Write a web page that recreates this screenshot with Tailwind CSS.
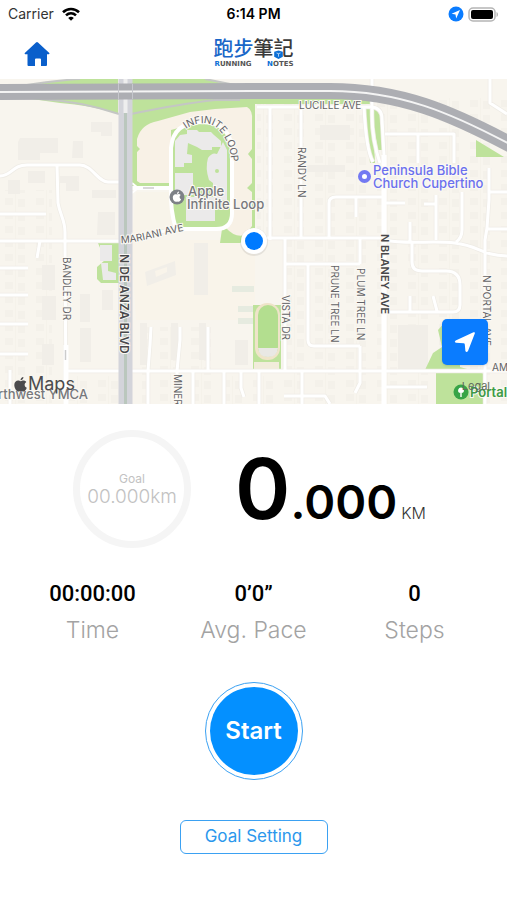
<!DOCTYPE html>
<html lang="en">
<head>
<meta charset="utf-8">
<meta name="viewport" content="width=device-width, initial-scale=1">
<title>Running Notes</title>
<script src="https://cdn.jsdelivr.net/npm/@tailwindcss/browser@4"></script>
</head>
<body class="min-h-screen bg-white font-['Inter','Noto_Sans_CJK_TC',sans-serif] text-black">

<!-- Status bar -->
<div class="grid h-7 grid-cols-3 items-center px-2 text-sm">
  <div class="flex items-center gap-2 text-[#333]">
    <span>Carrier</span>
    <svg class="h-[14px] w-[18px]" viewBox="0 0 18 14" fill="none" stroke="#000" stroke-width="2.6" aria-hidden="true">
      <path d="M1 5.2C5.5.9 12.500.9 17 5.200"/><path d="M4 8.400c2.900-2.700 7.100-2.700 10 0"/><path d="M9 13.800 6.200 10.900c1.700-1.500 3.900-1.500 5.600 0z" fill="#000" stroke="none"/>
    </svg>
  </div>
  <div class="text-center font-semibold">6:14 PM</div>
  <div class="flex items-center justify-end gap-1">
    <svg class="size-4" viewBox="0 0 16 16" aria-hidden="true"><circle cx="8" cy="8" r="7.500" fill="#0a7cff"/><path d="M12 4 3.600 7.800l3.900.7.700 3.900z" fill="#fff"/></svg>
    <svg class="h-[15px] w-[31px]" viewBox="0 0 31 15" aria-hidden="true"><rect x="1" y="1" width="26" height="13" rx="4" fill="#fff" stroke="#b5b5b5" stroke-width="1.500"/><rect x="3" y="3" width="22" height="9" rx="2" fill="#000"/><path d="M28.500 5v5c2-.8 2-4.200 0-5z" fill="#b5b5b5"/></svg>
  </div>
</div>

<!-- Navigation bar -->
<header class="grid h-[51px] grid-cols-3 items-center px-6">
  <a href="#" aria-label="Home" class="w-[26px]">
    <svg class="h-[26px] w-[26px]" viewBox="0 0 26 26" fill="#0a5fcb" aria-hidden="true"><path d="M12 1.400q1-.9 2 0L25.300 12q.6.900-.4 1.200H23V24q0 1-1 1h-5V18.500q0-1-1-1h-4q-1 0-1 1V25H4.500q-1 0-1-1V13.200H1.200Q.2 12.900.8 12z"/></svg>
  </a>
  <div class="flex justify-center">
    <div class="w-20">
      <div class="relative text-xl leading-5 font-medium whitespace-nowrap text-[#3a3a3a]">
        <span class="text-[#1a66c8]">跑步</span><span>筆記</span>
        <svg class="absolute right-[11px] bottom-0 size-[9px]" viewBox="0 0 9 9" aria-hidden="true"><rect width="9" height="9" fill="#fff"/><path d="M.2 1.800 4.500.5 8.800 1.800v5L4.500 8.900.2 6.800z" fill="#0a6fd6"/><path d="M2.500 3 4.500 3.700 6.500 3M4.500 3.700v3" stroke="#cfe4fb" stroke-width=".8" fill="none"/></svg>
      </div>
      <div class="flex justify-between pt-px pl-px font-['DejaVu_Sans',sans-serif] text-[7px] leading-2 font-bold text-[#555]">
        <span><span class="text-[#0a6fd6]">R</span>UNNING</span><span><span class="text-[#0a6fd6]">N</span>OTES</span>
      </div>
    </div>
  </div>
</header>

<main>
<!-- Map -->
<section class="relative h-[325px] overflow-hidden bg-[#f8f5ed]" aria-label="Map">
  <svg class="h-full w-full font-['Inter',sans-serif]" viewBox="0 79 507 325" preserveAspectRatio="xMidYMid slice">
    <defs>
      <pattern id="houses" width="31" height="14" patternUnits="userSpaceOnUse">
        <path d="M5 2h8v7H5zM18 3h7v8h-7z" fill="#f4f1ea"/><path d="M15.500 0v14" stroke="#f5f2ea"/>
      </pattern>
      <path id="streets" d="M0 176C12 176 12 165 27 165H80C92 165 98 182 108 182H119M57 165 58 203C60 215 65 220 65 232V242L66 404M0 214H46M0 241H120M40 241 37 258M0 268H28M0 295H28M0 324H28M0 354H28M10 370V404M67 371H507M151 327 150 345 148 371V404M180 327V340L177 371V404M208 327V371M193 371V404M224 371V404M241 371V388L244 397M131 239C150 238 160 229 180 229M257 107H370Q382 107 382 119L384 155M270 107V240M301 107V238M372 79V115Q372 140 380 163M364 107Q366 150 373 162M385 134H454V163M418 134V163M265 238H384M329 238V203Q329 197 336 197H384M356 197V217M386 203H405M436 195V240M424 204H436M410 222V241M462 192V230Q462 238 456 242M489 168V200L487 228 485 240V404M489 192H507M487 229H507M490 79V103L507 114M384 240C410 245 430 240 455 243S480 255 507 256M285 238V371M285 264H360M360 238V264M308 264V340Q308 346 314 346H360M360 346V383L355 393M412 241V262Q412 271 422 271H446Q460 271 460 285V305Q460 312 453 312H384M410 296V311M433 296 437 311M302 371V404M259 371V404M386 387H427M284 396H325L330 404"/>
    </defs>
    <rect y="79" width="507" height="325" fill="#f8f5ee"/>
    <path d="M257 98H507V404H285V240H257zM0 190H52V404H0zM140 327H215V404H140zM68 376H118V404H68zM216 376H290V404H216z" fill="url(#houses)"/>
    <path d="M131 240H255V320H136z" fill="#f9f4ea"/>

    <!-- Larger buildings -->
    <g fill="#f1eee8">
      <path d="M20 138H58V153H40V160H18V142zM73 141H83V158H72zM91 122H112V136H101V132H91zM28 171H45V183H28zM60 176H79V191H66V183H60zM8 180H20V194H8zM92 190H116V198H92zM98 212H115V235H97zM138 197H147V207H138zM42 265H55V290H42zM42 296H56V320H42zM42 344H54V365H42zM80 294H90V322H80zM80 328H91V362H80zM102 290H113V310H102zM145 272 175 261 176 275 147 286zM194 243H208V295H194zM140 323H147V365H140zM171 323H178V360H171zM199 323H206V360H199zM235 340H248V365H235zM398 325H428V370H398zM320 125H350V140H320zM300 165H345V172H300z"/>
    </g>
    <path d="M155 271 167 267V272L156 277z" fill="#f9f4ea"/>
    <path d="M232 286H254V292H232zM238 306H254V312H238zM238 318H254V324H238z" fill="#e6ebe0"/>

    <!-- Parks and verges -->
    <g fill="#bee29b">
      <path d="M20 86C50 82 70 79 80 79H118V86zM131 79H205L235 86H131zM25 98H118V114Q90 105 60 103z"/>
      <path d="M131 98H372V104H255V232L240 243H220L222 229H176L170 190H131z"/>
      <path d="M364 108H378Q383 111 383 120V150H378L373 122L375 163H370zM476 140 504 157H476zM98 243H119V283H101L97 279V267L105 260z"/>
      <path d="M253 305H281V369H253zM436 373 424 372 433 353 442 347 438 330 445 322 460 340V367L485 374V404H436z"/>
    </g>
    <path d="M137 181V152L140 149 137 146V139Q141 124 158 121L190 112 215 109 247 107Q253 110 252 121V149L248 154 252 159V183L247 188 252 192V226L245 235Q235 238 226 228L215 226V140L200 122 171 130V183H140z" fill="#f8f1e6"/>
    <path d="M136 192H171L173 229 132 238z" fill="#f8f4ea"/>
    <path d="M171 188V150Q173 122 202 122T232 152V213Q232 229 216 229H176Z" fill="#bee29b"/>
    <g fill="#ebeaea">
      <path d="M175 141 180 135 187 134V130H197L199 132H211L214 135 221 141V147H212V150H202L197 147 188 143 187 154 192 155V163H184V167H175z"/>
      <path d="M175 173H193V195H175zM186 197H215V221H186zM208 158Q212 152 217 154L223 142 227 150V200H213V183L209 180Q205 168 208 158z"/>
      <path d="M100 245H112V261H100zM101 263H108V271L116 273V280H103z"/>
    </g>
    <circle cx="189" cy="170" r="3" fill="#bee29b"/><circle cx="217" cy="171" r="2" fill="#bee29b"/>
    <rect x="255" y="303" width="25" height="57" rx="12" fill="#efe4c9"/>
    <rect x="258" y="305" width="20" height="52" rx="10" fill="#b3de8f"/>
    <path d="M258 348H278Q277 357 268 357T258 348z" fill="#e9e8e4"/>
    <path d="M254 362H279V369H254z" fill="#f2ecdb"/>

    <!-- Streets -->
    <use href="#streets" fill="none" stroke="#efece6" stroke-width="4.500" stroke-linejoin="round"/>
    <use href="#streets" fill="none" stroke="#fff" stroke-width="3" stroke-linejoin="round"/>
    <g fill="none" stroke="#fff">
      <path d="M384 155V404" stroke-width="5"/>
      <path d="M66 345V404" stroke-width="5"/>
      <path d="M131 188H171M171 190V148Q173 122 202 122T232 152V213Q232 229 216 229H176Q170 210 171 188" stroke-width="4"/>
      <path d="M132 183 138 188 132 193" stroke-width="2"/>
    </g>
    <path d="M143 188H154" stroke="#ccc" stroke-width="1.500"/>
    <path d="M65.500 350V360" stroke="#ccc" stroke-width="1.500"/>

    <!-- Boulevard and freeway -->
    <g fill="none">
      <path d="M20 86Q60 80 80 79M205 79 240 86M40 99Q80 101 119 114M131 114Q180 104 215 100H240" stroke="#c4c6c4" stroke-width="2"/>
      <path d="M125.500 79V404" stroke="#d3d4da" stroke-width="14"/>
      <path d="M125.500 112V404" stroke="#bac7bd" stroke-width="3"/>
      <path d="M125.500 79V113" stroke="#eee" stroke-width="4"/>
      <path d="M0 92 253 91H330C400 91 450 112 515 147" stroke="#adaeb3" stroke-width="16"/>
      <path d="M0 92 253 91H330C400 91 450 112 515 147" stroke="#f4f4f4" stroke-width="2"/>
      <path d="M118.500 84V99M132.500 84V99" stroke="#c6c7cd" stroke-width="1"/>
    </g>

    <!-- Street labels -->
    <path id="loop" d="M186 129C197 121 211 121 219 130 228 140 231 150 232 168" fill="none"/>
    <path id="mariani" d="M121 243C140 243 158 235 190 230" fill="none"/>
    <g class="fill-[#636366] stroke-[#fbf9f4] text-[10px]" stroke-width="2" paint-order="stroke">
      <text x="299" y="109">LUCILLE AVE</text>
      <text><textPath href="#loop">INFINITE LOOP</textPath></text>
      <text><textPath href="#mariani">MARIANI AVE</textPath></text>
      <text transform="translate(298 147) rotate(90)">RANDY LN</text>
      <text transform="translate(63 257) rotate(90)">BANDLEY DR</text>
      <text transform="translate(282 295) rotate(90)">VISTA DR</text>
      <text transform="translate(331 265) rotate(90)">PRUNE TREE LN</text>
      <text transform="translate(357 268) rotate(90)">PLUM TREE LN</text>
      <text transform="translate(483 275) rotate(90)">N PORTAL AVE</text>
      <text transform="translate(174 374) rotate(90)">MINER</text>
      <text x="492" y="371">AM</text>
    </g>
    <g class="fill-[#48484a] stroke-[#fbf9f4] font-semibold" stroke-width="2" paint-order="stroke">
      <text transform="translate(120 254) rotate(90)" class="text-xs">N DE ANZA BLVD</text>
      <text transform="translate(381 234) rotate(90)" class="text-[11px]">N BLANEY AVE</text>
    </g>

    <!-- Places -->
    <g class="text-[13px] font-medium" stroke="#fbf9f4" stroke-width="2" paint-order="stroke">
      <g class="fill-[#77787c]"><text x="188" y="196">Apple</text><text x="187" y="209">Infinite Loop</text><text x="-2" y="399">rthwest YMCA</text></g>
      <g class="fill-[#6b70ee]"><text x="373" y="175">Peninsula Bible</text><text x="373" y="188">Church Cupertino</text></g>
      <text x="470" y="397" class="fill-[#3d9b45] font-semibold">Portal</text>
    </g>
    <circle cx="177" cy="197" r="7.500" fill="#7d8187"/>
    <path d="M177 194.500c1.500-.9 3-.6 3.700.5-1.800 1.300-1.300 3.500.4 4.200-.7 2-2 3-4 2.300-2.100.8-4.300-.9-4.300-4 0-2.700 2-4 4.200-3zm0-.5c0-1.300.8-2.200 2-2.500.1 1.500-.8 2.500-2 2.500z" fill="#fff"/>
    <circle cx="364.500" cy="176.500" r="4.500" fill="#fff" stroke="#7379f2" stroke-width="4"/>
    <circle cx="461" cy="392" r="7.500" fill="#37a447"/>
    <path d="M461 387.500a3 3 0 0 1 2 5.200h-1.300V397h-1.400v-4.300H459a3 3 0 0 1 2-5.200z" fill="#fff"/>

    <!-- Current position -->
    <circle cx="254" cy="242" r="14" fill="#000" opacity=".08"/>
    <circle cx="254" cy="241" r="13" fill="#fff"/>
    <circle cx="254" cy="241" r="9" fill="#007aff"/>
  </svg>

  <div class="absolute bottom-2 left-[14px] flex items-center gap-px text-[#4b4b4d]">
    <svg class="h-[15px] w-[13px]" viewBox="0 0 13 15" fill="currentColor" aria-hidden="true"><path d="M6.700 4.200c1-.4 1.600-.8 2.700-.8 1.200 0 2.200.5 2.900 1.500-2.500 1.500-2 4.800.5 5.800-.7 1.900-1.900 3.800-3.300 3.800-1 0-1.400-.6-2.600-.6s-1.700.6-2.600.6C2.300 14.500.3 11 .3 8.100c0-3 1.900-4.600 3.800-4.600 1.100 0 1.900.7 2.600.7zM6.500 3.300C6.500 1.600 7.900.2 9.400.1c.2 1.700-1.300 3.200-2.900 3.200z"/></svg>
    <span class="text-lg leading-6">Maps</span>
  </div>
  <a href="#" class="absolute right-[17px] bottom-2 text-[11px] leading-5 text-[#5f6b5d]">Legal</a>
  <button type="button" aria-label="Show my location" class="absolute right-[19px] bottom-[39px] flex size-[46px] items-center justify-center rounded-[5px] bg-[#0a7cff] shadow-sm">
    <svg class="size-[22px]" viewBox="0 0 22 22" fill="#fff" aria-hidden="true"><path d="M19.500 1.300q1.900-.5 1.300 1.300L14 20q-1.500 2.200-2.600 0l-.6-6.500q-.1-1.200-1.200-1.300L2 11.800q-2.200-.9-.3-2.400z"/></svg>
  </button>
</section>

<!-- Distance -->
<section class="flex items-center justify-center gap-11 pt-[26px] pr-2">
  <div class="flex size-[118px] shrink-0 flex-col items-center justify-center rounded-full border-[7px] border-[#f5f5f5] text-[#c2c2c2]">
    <span class="text-xs leading-4">Goal</span>
    <span class="text-[19px] leading-5 font-light">00.000km</span>
  </div>
  <div class="flex items-baseline pt-3 leading-[84px]">
    <span class="text-[84px] font-semibold">0</span><span class="text-[47px] font-semibold">.000</span>
    <span class="ml-1 text-base font-light text-[#333]">KM</span>
  </div>
</section>

<!-- Statistics -->
<dl class="mt-[30px] grid grid-cols-3 px-3 text-center">
  <div class="flex flex-col-reverse"><dt class="text-[23px] leading-10 font-light text-[#a3a3a3]">Time</dt><dd class="font-[Roboto,sans-serif] text-[22px] leading-8 font-medium">00:00:00</dd></div>
  <div class="flex flex-col-reverse"><dt class="text-[23px] leading-10 font-light text-[#a3a3a3]">Avg. Pace</dt><dd class="font-[Roboto,sans-serif] text-[22px] leading-8 font-medium">0’0”</dd></div>
  <div class="flex flex-col-reverse"><dt class="text-[23px] leading-10 font-light text-[#a3a3a3]">Steps</dt><dd class="font-[Roboto,sans-serif] text-[22px] leading-8 font-medium">0</dd></div>
</dl>

<!-- Actions -->
<div class="mt-8 flex flex-col items-center gap-10">
  <button type="button" class="size-[98px] rounded-full border border-[#3ba1f2] p-1">
    <span class="flex size-full items-center justify-center rounded-full bg-[#0490ff] text-2xl font-semibold text-white">Start</span>
  </button>
  <button type="button" class="h-[34px] w-[148px] rounded-md border border-[#3ba1f2] text-[17px] text-[#2b97ec]">Goal Setting</button>
</div>
</main>
</body>
</html>
